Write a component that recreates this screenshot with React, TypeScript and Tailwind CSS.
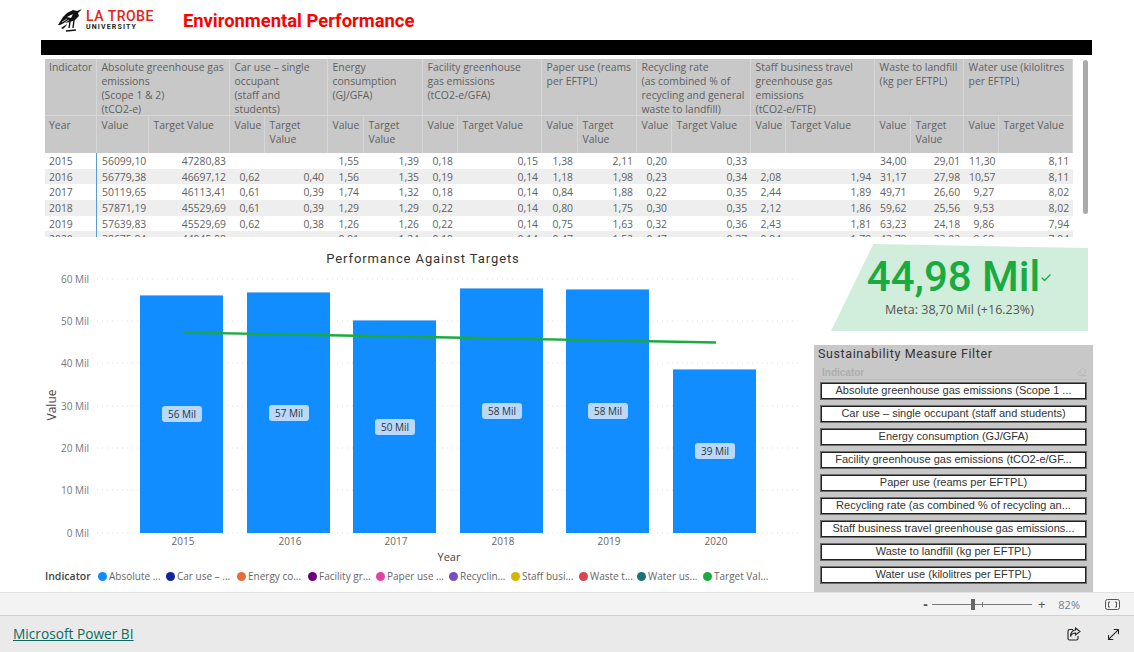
import { Check, Eraser, MoveDiagonal } from "lucide-react"

const colWidths = [52, 52, 81, 35, 63, 36, 59, 35, 84, 36, 59, 35, 79, 35, 89, 36, 53, 35, 74]

const groups = [
  { label: ["Absolute greenhouse gas", "emissions", "(Scope 1 & 2)", "(tCO2-e)"], sub: ["Value", "Target Value"] },
  { label: ["Car use – single", "occupant", "(staff and", "students)"], sub: ["Value", "Target Value"] },
  { label: ["Energy", "consumption", "(GJ/GFA)"], sub: ["Value", "Target Value"] },
  { label: ["Facility greenhouse", "gas emissions", "(tCO2-e/GFA)"], sub: ["Value", "Target Value"] },
  { label: ["Paper use (reams", "per EFTPL)"], sub: ["Value", "Target Value"] },
  { label: ["Recycling rate", "(as combined % of", "recycling and general", "waste to landfill)"], sub: ["Value", "Target Value"] },
  { label: ["Staff business travel", "greenhouse gas", "emissions", "(tCO2-e/FTE)"], sub: ["Value", "Target Value"] },
  { label: ["Waste to landfill", "(kg per EFTPL)"], sub: ["Value", "Target Value"] },
  { label: ["Water use (kilolitres", "per EFTPL)"], sub: ["Value", "Target Value"] },
]

const rows = [
  ["2015", "56099,10", "47280,83", "", "", "1,55", "1,39", "0,18", "0,15", "1,38", "2,11", "0,20", "0,33", "", "", "34,00", "29,01", "11,30", "8,11"],
  ["2016", "56779,38", "46697,12", "0,62", "0,40", "1,56", "1,35", "0,19", "0,14", "1,18", "1,98", "0,23", "0,34", "2,08", "1,94", "31,17", "27,98", "10,57", "8,11"],
  ["2017", "50119,65", "46113,41", "0,61", "0,39", "1,74", "1,32", "0,18", "0,14", "0,84", "1,88", "0,22", "0,35", "2,44", "1,89", "49,71", "26,60", "9,27", "8,02"],
  ["2018", "57871,19", "45529,69", "0,61", "0,39", "1,29", "1,29", "0,22", "0,14", "0,80", "1,75", "0,30", "0,35", "2,12", "1,86", "59,62", "25,56", "9,53", "8,02"],
  ["2019", "57639,83", "45529,69", "0,62", "0,38", "1,26", "1,26", "0,22", "0,14", "0,75", "1,63", "0,32", "0,36", "2,43", "1,81", "63,23", "24,18", "9,86", "7,94"],
  ["2020", "38675,84", "44945,98", "", "", "0,91", "1,24", "0,19", "0,14", "0,47", "1,52", "0,47", "0,37", "0,94", "1,78", "43,78", "23,02", "8,68", "7,94"],
]

const bars = [
  { year: "2015", x: 140, top: 295, label: "56 Mil", labelY: 406 },
  { year: "2016", x: 247, top: 292, label: "57 Mil", labelY: 405 },
  { year: "2017", x: 353, top: 320, label: "50 Mil", labelY: 419 },
  { year: "2018", x: 460, top: 288, label: "58 Mil", labelY: 403 },
  { year: "2019", x: 566, top: 289, label: "58 Mil", labelY: 403 },
  { year: "2020", x: 673, top: 369, label: "39 Mil", labelY: 443 },
]

const ticks = [
  { label: "60 Mil", y: 279 },
  { label: "50 Mil", y: 321 },
  { label: "40 Mil", y: 363 },
  { label: "30 Mil", y: 406 },
  { label: "20 Mil", y: 448 },
  { label: "10 Mil", y: 490 },
  { label: "0 Mil", y: 533 },
]

const legend = [
  { label: "Absolute ...", color: "bg-[#118dff]", width: "w-[68px]" },
  { label: "Car use – ...", color: "bg-[#12239e]", width: "w-[71px]" },
  { label: "Energy co...", color: "bg-[#e66c37]", width: "w-[71px]" },
  { label: "Facility gr...", color: "bg-[#6b007b]", width: "w-[68px]" },
  { label: "Paper use ...", color: "bg-[#e044a7]", width: "w-[73px]" },
  { label: "Recyclin...", color: "bg-[#744ec2]", width: "w-[62px]" },
  { label: "Staff busi...", color: "bg-[#d9b300]", width: "w-[68px]" },
  { label: "Waste t...", color: "bg-[#d64550]", width: "w-[58px]" },
  { label: "Water us...", color: "bg-[#197278]", width: "w-[66px]" },
  { label: "Target Val...", color: "bg-[#1aab40]", width: "w-[70px]" },
]

const slicerItems = [
  "Absolute greenhouse gas emissions (Scope 1 ...",
  "Car use – single occupant (staff and students)",
  "Energy consumption (GJ/GFA)",
  "Facility greenhouse gas emissions (tCO2-e/GF...",
  "Paper use (reams per EFTPL)",
  "Recycling rate (as combined % of recycling an...",
  "Staff business travel greenhouse gas emissions...",
  "Waste to landfill (kg per EFTPL)",
  "Water use (kilolitres per EFTPL)",
]

function Logo() {
  return (
    <div className="flex items-center gap-[3px]">
      <svg width="25" height="24" viewBox="0 0 25 24">
        <path d="M0 17 L5 9 L9 5 L15 2 L19 3 L24 1 L20 5 L21 8 L17 12 L12 14 L6 15 L2 17 Z" fill="#111" />
        <path d="M3 20 L9 16 L8 18 L5 21 Z" fill="#111" />
        <path d="M12 14 L11 20 M16 12 L15 20 M8 23 L18 22" stroke="#111" strokeWidth="1.4" fill="none" />
        <path d="M9 9 L15 6 L13 10 Z" fill="#fff" />
        <path d="M4 14 L9 11 M6 15 L11 12" stroke="#fff" strokeWidth="0.7" />
      </svg>
      <div className="flex flex-col font-['Roboto',sans-serif]">
        <span className="text-[14px] leading-[14px] font-medium tracking-[0.5px] text-[#e2231a]">LA TROBE</span>
        <span className="text-[7px] leading-[9px] font-bold tracking-[1.15px] text-[#222]">UNIVERSITY</span>
      </div>
    </div>
  )
}

function Table() {
  return (
    <div className="h-[178px] w-[1028px] overflow-hidden">
      <table className="w-[1028px] table-fixed border-collapse font-['Open_Sans',sans-serif] text-[10.4px] leading-[14px] text-[#5f5f5f]">
        <colgroup>
          {colWidths.map((w, i) => (
            <col key={i} style={{ width: w }} />
          ))}
        </colgroup>
        <thead className="bg-[#c8c8c8]">
          <tr className="h-[57px] align-top">
            <th className="px-[4px] pt-[1px] text-left font-normal shadow-[inset_-1px_-1px_0_#d6d6d6]">Indicator</th>
            {groups.map((g) => (
              <th key={g.label[0]} colSpan={2} className="pl-[4.5px] pr-[4px] pt-[1px] text-left font-normal whitespace-nowrap shadow-[inset_-1px_-1px_0_#d6d6d6]">
                {g.label.map((l) => (
                  <div key={l}>{l}</div>
                ))}
              </th>
            ))}
          </tr>
          <tr className="h-[37px] align-top">
            <th className="px-[4px] pt-[2px] text-left font-normal shadow-[inset_-1px_0_0_#d6d6d6]">Year</th>
            {groups.map((g, i) =>
              g.sub.map((s, j) => (
                <th key={`${i}-${j}`} className="pl-[4.5px] pr-[4px] pt-[2px] text-left font-normal shadow-[inset_-1px_0_0_#d6d6d6]">
                  {s}
                </th>
              )),
            )}
          </tr>
        </thead>
        <tbody>
          {rows.map((row, r) => (
            <tr key={row[0]} className={r % 2 === 1 ? "h-[15.7px] bg-[#eeeeee]" : "h-[15.7px] bg-white"}>
              {row.map((cell, c) => (
                <td
                  key={c}
                  className={
                    c === 0
                      ? "px-[4px] text-left whitespace-nowrap shadow-[inset_-1px_0_0_#5b9bd5]"
                      : c % 2 === 1
                        ? "px-[5px] text-right whitespace-nowrap"
                        : "px-[4px] text-right whitespace-nowrap"
                  }
                >
                  {cell}
                </td>
              ))}
            </tr>
          ))}
        </tbody>
      </table>
    </div>
  )
}

function Chart() {
  return (
    <svg width="810" height="329" viewBox="0 237 810 329" className="block font-['Open_Sans',sans-serif]">
      <text x="423" y="263" textAnchor="middle" fontSize="13" letterSpacing="0.9" fill="#333" fontFamily="Roboto">
        Performance Against Targets
      </text>
      {ticks.map((t) => (
        <g key={t.label}>
          <line x1="97" x2="800" y1={t.y} y2={t.y} stroke="#e0e0e0" strokeDasharray="1 4" />
          <text x="89" y={t.y + 3.5} textAnchor="end" fontSize="10" fill="#777">
            {t.label}
          </text>
        </g>
      ))}
      <text transform="translate(56 405) rotate(-90)" textAnchor="middle" fontSize="12" fill="#444">
        Value
      </text>
      {bars.map((b) => (
        <g key={b.year}>
          <rect x={b.x} y={b.top} width="83" height={533 - b.top} fill="#118dff" />
          <rect x={b.x} y={b.top} width="83" height="1" fill="#7db9f5" />
          <text x={b.x + 43} y="545" textAnchor="middle" fontSize="10" fill="#666">
            {b.year}
          </text>
        </g>
      ))}
      <polyline points="183,332.5 289,334.5 396,336.5 502,338.5 609,340.5 716,342.5" fill="none" stroke="#1aab40" strokeWidth="2.4" />
      {bars.map((b) => (
        <g key={b.label + b.year}>
          <rect x={b.x + 22} y={b.labelY} width="40" height="16" rx="3" fill="#b8d9fb" />
          <text x={b.x + 42} y={b.labelY + 11.5} textAnchor="middle" fontSize="10" fill="#333">
            {b.label}
          </text>
        </g>
      ))}
      <text x="449" y="561" textAnchor="middle" fontSize="11" fontWeight="500" fill="#444">
        Year
      </text>
    </svg>
  )
}

function Legend() {
  return (
    <div className="flex items-center pl-[45px] font-['Open_Sans',sans-serif] text-[10px] leading-[14px] text-[#666]">
      <span className="w-[53px] text-[10.5px] font-semibold text-[#444]">Indicator</span>
      {legend.map((l) => (
        <div key={l.label} className={`flex items-center gap-[2px] whitespace-nowrap ${l.width}`}>
          <span className={`h-[9px] w-[9px] shrink-0 rounded-full ${l.color}`} />
          <span>{l.label}</span>
        </div>
      ))}
    </div>
  )
}

function Kpi() {
  return (
    <div className="ml-[17px] mt-[7px] flex h-[87px] w-[257px] flex-col items-center bg-[#d1eddb] pt-[8px] [clip-path:polygon(16.5%_0,100%_4.6%,100%_100%,0_100%)]">
      <div className="flex items-center">
        <span className="font-['Roboto',sans-serif] text-[42px] leading-[50px] font-medium text-[#1aab40]">44,98 Mil</span>
        <Check className="mt-[2px] h-[12px] w-[12px] text-[#1aab40]" strokeWidth={2.5} />
      </div>
      <span className="font-['Open_Sans',sans-serif] text-[12.5px] leading-[16px] text-[#555]">Meta: 38,70 Mil (+16.23%)</span>
    </div>
  )
}

function Slicer() {
  return (
    <div className="mt-[14px] flex h-[247px] w-[279px] flex-col bg-[#c8c8c8] px-[6px]">
      <div className="-ml-[2px] pt-[1px] font-['Roboto',sans-serif] text-[12.5px] leading-[16px] tracking-[0.6px] text-[#333]">
        Sustainability Measure Filter
      </div>
      <div className="mt-[3px] flex h-[15px] items-center justify-between border-b border-[#bdbdbd] pl-[2px] font-['Liberation_Sans',sans-serif] text-[10px] font-bold text-[#adadad]">
        <span>Indicator</span>
        <Eraser className="h-[10px] w-[10px] text-[#b4b4b4]" />
      </div>
      <div className="mx-[1px] mt-[3px] flex flex-col gap-[7px]">
        {slicerItems.map((s) => (
          <div
            key={s}
            className="flex h-[16px] items-center justify-center border border-[#222] bg-white pb-[1px] font-['Liberation_Sans',sans-serif] text-[11px] whitespace-nowrap text-[#333] shadow-[0_0_0_1px_#6e6e6e]"
          >
            {s}
          </div>
        ))}
      </div>
    </div>
  )
}

function ZoomBar() {
  return (
    <div className="flex h-[23px] items-center justify-end border-t border-[#e2e2e2] bg-[#f3f3f3] pr-[14px] font-['Open_Sans',sans-serif] text-[#555]">
      <span className="text-[14px] font-bold leading-none">-</span>
      <div className="relative ml-[4px] h-px w-[100px] bg-[#777]">
        <span className="absolute -top-[5px] left-[39px] h-[11px] w-[4px] bg-[#666]" />
        <span className="absolute -top-[2px] left-[50px] h-[5px] w-px bg-[#777]" />
      </div>
      <span className="ml-[6px] text-[13px] leading-none">+</span>
      <span className="ml-[13px] text-[11px] leading-none text-[#6f8296]">82%</span>
      <svg className="ml-[25px]" width="15" height="11" viewBox="0 0 15 11" fill="none" stroke="#555">
        <rect x="0.5" y="0.5" width="14" height="10" rx="2" />
        <path d="M5 3H3.5V8H5M10 3H11.5V8H10" />
      </svg>
    </div>
  )
}

function FooterBar() {
  return (
    <div className="flex h-[37px] items-center justify-between border-t border-[#cfcfcf] bg-[#eaeaea] pl-[13px] pr-[12px]">
      <a className="font-['Open_Sans',sans-serif] text-[13.7px] text-[#0b6a5f] underline">Microsoft Power BI</a>
      <div className="flex items-center gap-[24px]">
        <svg width="14" height="14" viewBox="0 0 14 14" fill="none" stroke="#222" strokeWidth="1.1">
          <path d="M6 2.5H2.5A1.5 1.5 0 0 0 1 4v7.5A1.5 1.5 0 0 0 2.5 13h7a1.5 1.5 0 0 0 1.5-1.5V9" />
          <path d="M8.5 1L13 4.5 8.5 8V6C6 6 4.5 7 3.5 9.5 3.7 6 5.5 3.2 8.5 3Z" />
        </svg>
        <MoveDiagonal className="h-[17px] w-[17px] text-[#222]" strokeWidth={1.5} />
      </div>
    </div>
  )
}

export default function App() {
  return (
    <div className="flex h-[652px] w-[1134px] flex-col overflow-hidden bg-white">
      <div className="flex h-[592px] flex-col">
        <div className="flex h-[40px] items-center pl-[58px]">
          <Logo />
          <h1 className="ml-[29px] pt-[1px] font-['Roboto',sans-serif] text-[18.4px] font-bold text-[#ff0000]">Environmental Performance</h1>
        </div>
        <div className="ml-[41px] h-[15px] w-[1051px] bg-black" />
        <div className="ml-[45px] mt-[4px] flex">
          <Table />
          <div className="ml-[10px] mt-[1px] h-[154px] w-[5px] rounded-full bg-[#ababab]" />
        </div>
        <div className="flex">
          <div className="flex w-[814px] flex-col">
            <Chart />
            <div className="mt-[3px]">
              <Legend />
            </div>
          </div>
          <div className="flex flex-col">
            <Kpi />
            <Slicer />
          </div>
        </div>
      </div>
      <ZoomBar />
      <FooterBar />
    </div>
  )
}
